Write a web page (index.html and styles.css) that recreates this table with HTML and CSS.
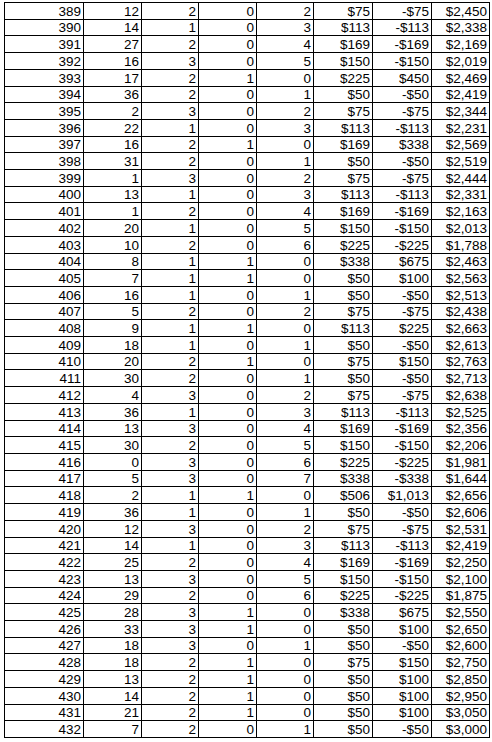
FILE: index.html
```html
<!DOCTYPE html>
<html>
<head>
<meta charset="utf-8">
<link rel="stylesheet" href="styles.css">
</head>
<body>
<div class="sheet">
<table class="grid">
<colgroup>
<col class="c-id"><col class="c-a"><col class="c-b"><col class="c-c"><col class="c-d"><col class="c-e"><col class="c-f"><col class="c-g">
</colgroup>
<tbody>
<tr><td>389</td><td>12</td><td>2</td><td>0</td><td>2</td><td>$75</td><td>-$75</td><td>$2,450</td></tr>
<tr><td>390</td><td>14</td><td>1</td><td>0</td><td>3</td><td>$113</td><td>-$113</td><td>$2,338</td></tr>
<tr><td>391</td><td>27</td><td>2</td><td>0</td><td>4</td><td>$169</td><td>-$169</td><td>$2,169</td></tr>
<tr><td>392</td><td>16</td><td>3</td><td>0</td><td>5</td><td>$150</td><td>-$150</td><td>$2,019</td></tr>
<tr><td>393</td><td>17</td><td>2</td><td>1</td><td>0</td><td>$225</td><td>$450</td><td>$2,469</td></tr>
<tr><td>394</td><td>36</td><td>2</td><td>0</td><td>1</td><td>$50</td><td>-$50</td><td>$2,419</td></tr>
<tr><td>395</td><td>2</td><td>3</td><td>0</td><td>2</td><td>$75</td><td>-$75</td><td>$2,344</td></tr>
<tr><td>396</td><td>22</td><td>1</td><td>0</td><td>3</td><td>$113</td><td>-$113</td><td>$2,231</td></tr>
<tr><td>397</td><td>16</td><td>2</td><td>1</td><td>0</td><td>$169</td><td>$338</td><td>$2,569</td></tr>
<tr><td>398</td><td>31</td><td>2</td><td>0</td><td>1</td><td>$50</td><td>-$50</td><td>$2,519</td></tr>
<tr><td>399</td><td>1</td><td>3</td><td>0</td><td>2</td><td>$75</td><td>-$75</td><td>$2,444</td></tr>
<tr><td>400</td><td>13</td><td>1</td><td>0</td><td>3</td><td>$113</td><td>-$113</td><td>$2,331</td></tr>
<tr><td>401</td><td>1</td><td>2</td><td>0</td><td>4</td><td>$169</td><td>-$169</td><td>$2,163</td></tr>
<tr><td>402</td><td>20</td><td>1</td><td>0</td><td>5</td><td>$150</td><td>-$150</td><td>$2,013</td></tr>
<tr><td>403</td><td>10</td><td>2</td><td>0</td><td>6</td><td>$225</td><td>-$225</td><td>$1,788</td></tr>
<tr><td>404</td><td>8</td><td>1</td><td>1</td><td>0</td><td>$338</td><td>$675</td><td>$2,463</td></tr>
<tr><td>405</td><td>7</td><td>1</td><td>1</td><td>0</td><td>$50</td><td>$100</td><td>$2,563</td></tr>
<tr><td>406</td><td>16</td><td>1</td><td>0</td><td>1</td><td>$50</td><td>-$50</td><td>$2,513</td></tr>
<tr><td>407</td><td>5</td><td>2</td><td>0</td><td>2</td><td>$75</td><td>-$75</td><td>$2,438</td></tr>
<tr><td>408</td><td>9</td><td>1</td><td>1</td><td>0</td><td>$113</td><td>$225</td><td>$2,663</td></tr>
<tr><td>409</td><td>18</td><td>1</td><td>0</td><td>1</td><td>$50</td><td>-$50</td><td>$2,613</td></tr>
<tr><td>410</td><td>20</td><td>2</td><td>1</td><td>0</td><td>$75</td><td>$150</td><td>$2,763</td></tr>
<tr><td>411</td><td>30</td><td>2</td><td>0</td><td>1</td><td>$50</td><td>-$50</td><td>$2,713</td></tr>
<tr><td>412</td><td>4</td><td>3</td><td>0</td><td>2</td><td>$75</td><td>-$75</td><td>$2,638</td></tr>
<tr><td>413</td><td>36</td><td>1</td><td>0</td><td>3</td><td>$113</td><td>-$113</td><td>$2,525</td></tr>
<tr><td>414</td><td>13</td><td>3</td><td>0</td><td>4</td><td>$169</td><td>-$169</td><td>$2,356</td></tr>
<tr><td>415</td><td>30</td><td>2</td><td>0</td><td>5</td><td>$150</td><td>-$150</td><td>$2,206</td></tr>
<tr><td>416</td><td>0</td><td>3</td><td>0</td><td>6</td><td>$225</td><td>-$225</td><td>$1,981</td></tr>
<tr><td>417</td><td>5</td><td>3</td><td>0</td><td>7</td><td>$338</td><td>-$338</td><td>$1,644</td></tr>
<tr><td>418</td><td>2</td><td>1</td><td>1</td><td>0</td><td>$506</td><td>$1,013</td><td>$2,656</td></tr>
<tr><td>419</td><td>36</td><td>1</td><td>0</td><td>1</td><td>$50</td><td>-$50</td><td>$2,606</td></tr>
<tr><td>420</td><td>12</td><td>3</td><td>0</td><td>2</td><td>$75</td><td>-$75</td><td>$2,531</td></tr>
<tr><td>421</td><td>14</td><td>1</td><td>0</td><td>3</td><td>$113</td><td>-$113</td><td>$2,419</td></tr>
<tr><td>422</td><td>25</td><td>2</td><td>0</td><td>4</td><td>$169</td><td>-$169</td><td>$2,250</td></tr>
<tr><td>423</td><td>13</td><td>3</td><td>0</td><td>5</td><td>$150</td><td>-$150</td><td>$2,100</td></tr>
<tr><td>424</td><td>29</td><td>2</td><td>0</td><td>6</td><td>$225</td><td>-$225</td><td>$1,875</td></tr>
<tr><td>425</td><td>28</td><td>3</td><td>1</td><td>0</td><td>$338</td><td>$675</td><td>$2,550</td></tr>
<tr><td>426</td><td>33</td><td>3</td><td>1</td><td>0</td><td>$50</td><td>$100</td><td>$2,650</td></tr>
<tr><td>427</td><td>18</td><td>3</td><td>0</td><td>1</td><td>$50</td><td>-$50</td><td>$2,600</td></tr>
<tr><td>428</td><td>18</td><td>2</td><td>1</td><td>0</td><td>$75</td><td>$150</td><td>$2,750</td></tr>
<tr><td>429</td><td>13</td><td>2</td><td>1</td><td>0</td><td>$50</td><td>$100</td><td>$2,850</td></tr>
<tr><td>430</td><td>14</td><td>2</td><td>1</td><td>0</td><td>$50</td><td>$100</td><td>$2,950</td></tr>
<tr><td>431</td><td>21</td><td>2</td><td>1</td><td>0</td><td>$50</td><td>$100</td><td>$3,050</td></tr>
<tr><td>432</td><td>7</td><td>2</td><td>0</td><td>1</td><td>$50</td><td>-$50</td><td>$3,000</td></tr>
</tbody>
</table>
</div>
</body>
</html>
```
FILE: styles.css
```css
html, body {
  margin: 0;
  padding: 0;
  background: #ffffff;
}

.sheet {
  padding: 2px 0 0 4px;
}

.grid {
  border-collapse: collapse;
  table-layout: fixed;
  width: 485px;
  height: 736px;
  font-family: "Liberation Sans", Arial, sans-serif;
  font-size: 13.5px;
  color: #000000;
}

.c-id { width: 79px; }
.c-a { width: 58px; }
.c-b { width: 57px; }
.c-c { width: 58px; }
.c-d { width: 57px; }
.c-e { width: 59px; }
.c-f { width: 59px; }
.c-g { width: 58px; }

.grid td {
  border: 1px solid #000000;
  padding: 0 2px 0 0;
  text-align: right;
  vertical-align: bottom;
  line-height: 14px;
  white-space: nowrap;
  overflow: hidden;
}
```
